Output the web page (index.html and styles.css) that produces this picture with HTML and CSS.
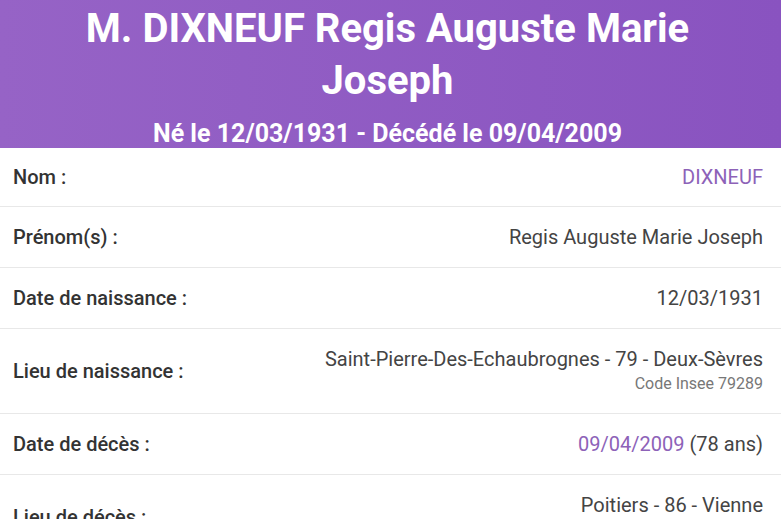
FILE: index.html
```html
<!DOCTYPE html>
<html lang="fr">
<head>
  <meta charset="UTF-8">
  <meta name="viewport" content="width=device-width, initial-scale=1.0">
  <title>DIXNEUF Regis Auguste Marie Joseph</title>
  <link rel="stylesheet" href="styles.css">
</head>
<body>
  <header class="entete">
    <h1>M. DIXNEUF Regis Auguste Marie Joseph</h1>
    <h2>Né le 12/03/1931 - Décédé le 09/04/2009</h2>
  </header>

  <div class="fiche">
    <div class="ligne">
      <span class="libelle">Nom :</span>
      <span class="valeur"><span class="lien">DIXNEUF</span></span>
    </div>
    <div class="ligne">
      <span class="libelle">Prénom(s) :</span>
      <span class="valeur">Regis Auguste Marie Joseph</span>
    </div>
    <div class="ligne">
      <span class="libelle">Date de naissance :</span>
      <span class="valeur">12/03/1931</span>
    </div>
    <div class="ligne">
      <span class="libelle">Lieu de naissance :</span>
      <span class="valeur">
        Saint-Pierre-Des-Echaubrognes - 79 - Deux-Sèvres
        <small>Code Insee 79289</small>
      </span>
    </div>
    <div class="ligne">
      <span class="libelle">Date de décès :</span>
      <span class="valeur"><span class="lien">09/04/2009</span> (78 ans)</span>
    </div>
    <div class="ligne">
      <span class="libelle">Lieu de décès :</span>
      <span class="valeur">
        Poitiers - 86 - Vienne
        <small>Code Insee 86194</small>
      </span>
    </div>
  </div>
</body>
</html>
```

FILE: styles.css
```css
:root {
  --violet-texte: #8d62b8;
  --bordure: #e8e8e8;
}

body {
  margin: 0;
  font-family: Roboto, "Liberation Sans", sans-serif;
  background: #fff;
  color: #444;
}

.entete {
  background: linear-gradient(to right, #9663c6, #8953c0);
  color: white;
  text-align: center;
  padding: 3px 26px 0 20px;
  height: 145px;
}

.entete h1 {
  margin: 0;
  font-size: 40px;
  line-height: 52px;
  font-weight: 700;
}

.entete h2 {
  margin: 12px 0 0;
  font-size: 25px;
  line-height: 30px;
  font-weight: 700;
}

.ligne {
  display: flex;
  justify-content: space-between;
  align-items: center;
  padding: 17px 18px 17px 13px;
  border-bottom: 1px solid var(--bordure);
  font-size: 20px;
  line-height: 26px;
}

.ligne:first-child {
  padding-top: 16px;
  padding-bottom: 16px;
}

.libelle {
  font-weight: 500;
  color: #333;
}

.valeur {
  text-align: right;
  color: #444;
}

.valeur small {
  display: block;
  font-size: 16px;
  line-height: 24px;
  color: #777;
}

.lien {
  color: var(--violet-texte);
}
```
